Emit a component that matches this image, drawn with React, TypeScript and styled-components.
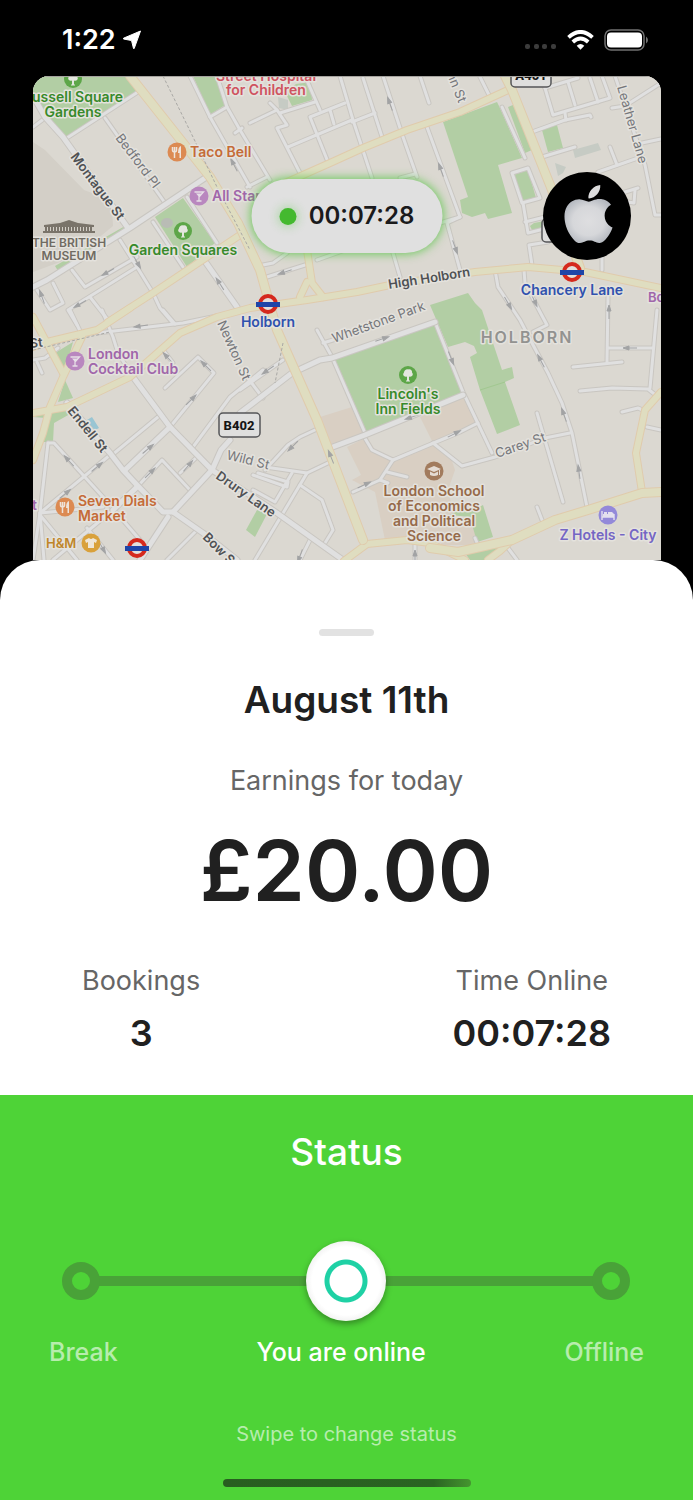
import React, { useState } from "react";
import styled, { createGlobalStyle } from "styled-components";

const sans = `Inter, "Liberation Sans", sans-serif`;

const GlobalStyle = createGlobalStyle`
  *, *::before, *::after { box-sizing: border-box; }
  body { margin: 0; background: #000; font-family: ${sans}; }
  h1, h2, p, dl, dd { margin: 0; }
`;

const Screen = styled.main`
  display: flex;
  flex-direction: column;
  min-height: 100vh;
  background: #000;
  color: #202020;
`;

/* ---------- status bar ---------- */

const StatusBar = styled.header`
  display: flex;
  align-items: center;
  justify-content: space-between;
  height: 76px;
  padding: 3px 44px 0 62px;
  color: #fff;
`;

const Cluster = styled.div<{ $gap: number }>`
  display: flex;
  align-items: center;
  gap: ${(p) => p.$gap}px;
`;

const Clock = styled.time`
  font-size: 27px;
  line-height: 32px;
  font-weight: 600;
`;

/* ---------- map ---------- */

const MapPanel = styled.section`
  position: relative;
  margin: 0 32px 0 33px;
  border-radius: 16px 16px 0 0;
  overflow: hidden;
  background: #dbd8d1;
`;

const MapSvg = styled.svg`
  display: block;
  width: 100%;
  height: auto;
  font-family: ${sans};
`;

const TimerPill = styled.div`
  position: absolute;
  top: 103px;
  left: 50%;
  transform: translateX(-50%);
  display: flex;
  align-items: center;
  justify-content: center;
  gap: 12px;
  width: 191px;
  height: 74px;
  border-radius: 37px;
  background: #e0e0e0;
  box-shadow: 0 0 10px 1px rgba(70, 195, 50, 0.75);
  font-size: 24px;
  line-height: 32px;
  font-weight: 600;
  color: #1a1a1c;
`;

const LiveDot = styled.span`
  width: 17px;
  height: 17px;
  border-radius: 50%;
  background: #44b92f;
  box-shadow: 0 0 10px 2px rgba(70, 195, 50, 0.3);
`;

const ProfileButton = styled.button`
  position: absolute;
  top: 96px;
  right: 30px;
  display: flex;
  align-items: center;
  justify-content: center;
  width: 88px;
  height: 88px;
  padding: 0 0 4px 2px;
  border: 0;
  border-radius: 50%;
  background: #000;
`;

type Pt = string;

const parks: Pt[] = [
  "33,76 127,76 137,91 66,138 33,98",
  "193,76 215,76 225,105 210,115",
  "155,217 183,198 215,243 187,267",
  "125,226 128,231 60,274 55,266",
  "285,92 296,84 311,82 312,100 292,106",
  "443,122 497,102 500,108 522,158 498,165 512,213 488,219 485,213 472,217 462,213 460,200 468,197",
  "508,107 513,105 532,150 525,153",
  "542,130 557,125 563,148 548,152",
  "513,175 528,170 536,198 520,202",
  "530,226 534,223 550,220 550,228 532,230",
  "430,305 468,293 475,303 482,310 502,370 512,367 514,378 505,382 520,425 497,434 480,390 470,357 477,353 474,346 465,342 448,347",
  "332,360 435,323 463,395 365,433",
  "470,512 483,505 493,537 477,542 470,517 450,515 458,510",
  "465,553 513,540 500,551 488,560 470,560",
  "257,510 267,514 255,537 246,530",
  "55,353 73,342 65,372",
  "65,380 73,398 58,402",
  "33,417 70,408 70,414 54,423 53,442 43,442 46,418",
];

const campus: Pt[] = [
  "320,417 352,407 365,433 332,447",
  "347,447 367,437 375,450 395,460 433,443 450,455 455,470 448,490 460,540 385,540 375,492 352,480 361,475",
  "420,417 463,397 478,423 433,443",
  "460,520 472,518 478,545 440,545",
];

const buildings: Pt[] = [
  "33,142 45,150 84,190 100,196 112,208 113,226 96,240 60,262 33,272",
];

const slateBlocks: Pt[] = [
  "573,150 598,143 601,150 575,158",
  "555,163 566,167 563,173 558,176",
  "278,97 288,100 288,110 279,108",
];

const minorRoads: Pt[] = [
  "67,138 138,92",
  "105,118 165,203",
  "33,127 45,118",
  "187,197 217,243",
  "153,222 183,267",
  "120,240 137,267 153,293 160,308 172,322",
  "137,257 85,287 72,270",
  "137,267 68,310 77,325",
  "90,297 108,320",
  "37,290 50,310 63,303 53,283",
  "190,76 210,117 250,187",
  "217,76 227,107 210,117",
  "227,107 240,130 270,180",
  "247,187 267,177",
  "235,133 242,128",
  "340,76 353,120 372,178",
  "363,78 382,137",
  "383,76 403,137 417,177",
  "420,76 429,103",
  "427,127 460,217 447,223 460,270",
  "440,223 460,217",
  "352,122 375,113",
  "250,123 277,110 270,103",
  "277,110 287,125 277,128 300,173",
  "280,113 315,102",
  "305,76 320,110",
  "345,103 310,117 328,162",
  "288,147 352,120",
  "330,110 334,124",
  "400,178 415,174",
  "393,253 400,277",
  "317,260 345,250",
  "263,265 273,263 287,253",
  "267,277 305,265",
  "502,107 525,158",
  "480,77 489,95",
  "512,173 528,168 540,198 522,203 512,173",
  "523,203 528,233 548,228",
  "525,222 545,217",
  "532,132 565,120 590,115 591,117",
  "545,88 553,115 610,98 602,76",
  "545,88 578,78",
  "568,82 575,105",
  "590,78 598,102",
  "565,113 566,120",
  "542,157 575,147",
  "612,108 625,106 661,83",
  "615,76 645,165 655,215 661,215",
  "598,172 638,158",
  "610,147 617,165",
  "642,143 661,139",
  "622,193 638,188",
  "635,190 634,203 628,202",
  "532,265 529,245 548,242",
  "602,250 602,270",
  "495,270 498,287 520,320 532,343 548,373 562,403 572,433 587,507",
  "524,270 525,283 540,312 547,325 533,332",
  "608,297 607,362",
  "573,367 622,362",
  "608,348 653,348",
  "657,310 650,388",
  "580,391 612,388 648,389 658,397",
  "622,412 638,408 645,411",
  "647,427 661,430",
  "317,330 332,357 365,433",
  "323,343 333,340",
  "435,322 463,392 492,453",
  "363,435 372,450 393,460 460,432 478,423",
  "393,460 380,480 353,492",
  "387,472 407,477",
  "380,480 388,483",
  "433,443 462,466 495,457 545,438 570,433",
  "537,413 563,502",
  "537,507 542,520",
  "475,538 478,545",
  "508,548 517,560",
  "240,390 283,360",
  "247,377 263,398",
  "265,470 288,445 300,437 315,430",
  "265,467 307,473 330,462",
  "307,473 255,560",
  "300,485 322,500 333,530 325,543",
  "310,540 300,560",
  "415,545 415,560",
  "292,473 275,502 253,490",
  "253,475 287,487 288,482 258,473",
  "70,310 82,335",
  "97,333 183,323 217,316",
  "163,310 175,324",
  "102,310 113,337 118,353 133,377",
  "33,360 45,358 58,348",
  "37,362 42,373",
  "163,350 173,363",
  "165,388 198,357 214,373 170,427",
  "112,455 158,417",
  "193,447 230,397 263,370",
  "137,487 162,460 190,490",
  "180,473 197,457",
  "40,513 110,455",
  "48,443 54,443 103,497 140,540",
  "48,443 40,513 33,560",
  "40,513 44,560",
  "40,513 103,507",
  "40,515 77,560",
  "53,560 113,510",
  "167,560 197,530",
  "87,528 113,560",
];

const wideRoads: Pt[] = [
  "33,96 45,117 63,137 128,228",
  "33,287 47,280 130,228 205,178",
  "202,257 237,307",
  "133,377 170,427 212,470 277,513 343,560",
  "67,403 110,453 123,470 137,485 163,512 173,512 203,533 237,560",
  "173,512 212,470 221,450 230,440",
  "125,470 170,427",
  "113,510 137,487",
  "140,560 168,517",
  "240,413 257,400 292,373 320,360 332,358 435,322",
  "330,448 365,435 463,395",
];

const mainRoads: Pt[] = [
  "108,322 153,293 243,233",
  "285,183 330,163 363,148 407,130 460,112 508,90",
  "33,413 67,407 130,377 180,333 217,317 250,308 307,300 357,292 390,285 475,272 528,267 585,272 661,288",
  "307,250 312,283 323,297",
  "307,282 300,297",
  "33,317 63,373",
  "33,347 47,342 97,330 130,308",
  "82,337 63,377 50,407 43,433 33,460",
  "661,392 645,410 636,453 642,492",
  "512,540 500,551 488,560",
  "344,561 367,544 407,540 430,543 465,560",
];

const trunkRoads: Pt[] = [
  "130,76 210,177 238,223 260,270 277,330 317,420 363,540",
  "505,76 512,90 552,190 580,268",
  "661,492 642,493 588,510 555,520 512,540 458,552 430,548",
];

const railLines: Pt[] = ["163,76 193,137 217,187 250,250", "283,343 275,383", "33,350 110,332"];

const arrows: [number, number, number][] = [
  [234, 165, 62], [137, 262, 240], [108, 272, -30], [80, 304, -30], [42, 297, 70],
  [220, 284, 57], [390, 104, 70], [441, 170, 70], [455, 247, 250], [285, 272, -18],
  [382, 339, 162], [451, 358, 248], [412, 417, 342], [454, 434, 153], [364, 485, 155],
  [331, 457, 68], [293, 446, -45], [268, 370, -35], [508, 303, 240], [534, 300, 245],
  [609, 312, 90], [630, 348, 0], [541, 361, 62], [564, 415, 70], [579, 472, 82],
  [141, 326, -8], [168, 358, 48], [206, 366, 45], [191, 400, 135], [148, 449, 140],
  [150, 473, 135], [188, 466, 130], [97, 467, 140], [69, 461, 48], [65, 494, 140],
  [300, 556, -70], [102, 547, 240], [415, 557, 90],
];

const Roads = ({ lines, width, fill, edge }: { lines: Pt[]; width: number; fill: string; edge: string }) => (
  <g fill="none" strokeLinecap="round" strokeLinejoin="round">
    {lines.map((l, i) => <polyline key={`e${i}`} points={l} stroke={edge} strokeWidth={width + 2} />)}
    {lines.map((l, i) => <polyline key={`f${i}`} points={l} stroke={fill} strokeWidth={width} />)}
  </g>
);

const Areas = ({ shapes, fill }: { shapes: Pt[]; fill: string }) => (
  <g fill={fill}>{shapes.map((s, i) => <polygon key={i} points={s} />)}</g>
);

type LabelProps = {
  x: number; y: number; lines: string[]; color: string; size?: number; step?: number;
  weight?: number; anchor?: "start" | "middle"; angle?: number; spacing?: number;
};

const Label = ({ x, y, lines, color, size = 14, step = 15, weight = 600, anchor = "middle", angle = 0, spacing = 0 }: LabelProps) => (
  <text
    fill={color} fontSize={size} fontWeight={weight} textAnchor={anchor} letterSpacing={spacing}
    stroke="#e4e2dd" strokeWidth={3} strokeLinejoin="round" paintOrder="stroke"
    transform={`rotate(${angle} ${x} ${y})`}
  >
    {lines.map((l, i) => <tspan key={l} x={x} y={y + i * step}>{l}</tspan>)}
  </text>
);

const Underground = ({ x, y }: { x: number; y: number }) => (
  <g>
    <circle cx={x} cy={y} r={8} fill="#e2dfdc" stroke="#d5291d" strokeWidth={4} />
    <rect x={x - 12} y={y - 2} width={24} height={5} fill="#1f45a8" />
  </g>
);

const Tree = ({ x, y }: { x: number; y: number }) => (
  <g transform={`translate(${x} ${y})`}>
    <circle r={9} fill="#5da648" />
    <path d="M-1 5.500V1.500C-4 2.500-6-.5-4-2.500-4-5-1-6.500 0-5.500 2-6.500 4.500-5 4-2.500 6-.5 4 2.500 1 1.500V5.500H2V6.500H-2V5.500Z" fill="#e4e6df" />
  </g>
);

const Cocktail = ({ x, y }: { x: number; y: number }) => (
  <g transform={`translate(${x} ${y})`}>
    <circle r={9.500} fill="#b987bf" />
    <path d="M-4.500-4H4.500L0 1V5M-2.500 5H2.500" fill="none" stroke="#e6dfe6" strokeWidth={1.300} />
    <path d="M-3-2.500H3L0 1Z" fill="#e6dfe6" />
  </g>
);

const Cutlery = ({ x, y }: { x: number; y: number }) => (
  <g transform={`translate(${x} ${y})`}>
    <circle r={9.500} fill="#dc8a52" />
    <path d="M-4.500-5V-2Q-4.500 0-2.500 0T-.5-2V-5M-2.500-5V6" fill="none" stroke="#eee3da" strokeWidth={1.500} />
    <path d="M4-6V6H2.500V1H1Q1-5 4-6Z" fill="#eee3da" />
  </g>
);

const LondonMap = () => (
  <MapSvg viewBox="33 76 628 484" role="img" aria-label="Map of Holborn, London">
    <rect x={33} y={76} width={628} height={484} fill="#dbd8d1" />
    <Areas shapes={buildings} fill="#d3cfc7" />
    <Areas shapes={campus} fill="#d9cfc3" />
    <Areas shapes={parks} fill="#b2cea4" />
    <Areas shapes={slateBlocks} fill="#c6cbc4" />
    <polygon points="87,420 92,417 99,428 93,431" fill="#99c5d3" />
    <ellipse cx={167} cy={223} rx={6} ry={5} fill="#b9bcb5" />
    <polyline points="480,390 505,382" stroke="#a1c890" fill="none" />

    <Roads lines={minorRoads} width={3} fill="#e0e0e0" edge="#c9c6c1" />
    <Roads lines={wideRoads} width={5} fill="#e0e0e0" edge="#c9c6c1" />
    <Roads lines={mainRoads} width={6} fill="#dfddc0" edge="#e0cbac" />
    <Roads lines={trunkRoads} width={8} fill="#dfddc0" edge="#e0cbac" />

    <g fill="none" stroke="#a9a8a5" strokeWidth={1} strokeDasharray="3 2">
      {railLines.map((l) => <polyline key={l} points={l} />)}
    </g>

    <g stroke="#a2a3a4" fill="#a2a3a4" strokeWidth={1}>
      {arrows.map(([x, y, a], i) => (
        <g key={i} transform={`translate(${x} ${y}) rotate(${a})`}>
          <path d="M-2 0H7" />
          <path d="M-7 0L-1-2V2Z" />
        </g>
      ))}
    </g>

    <Tree x={73} y={79} />
    <Label x={73} y={102} lines={["Russell Square", "Gardens"]} color="#378a2b" />
    <Tree x={183} y={231} />
    <Label x={183} y={255} lines={["Garden Squares"]} color="#378a2b" />
    <Tree x={408} y={375} />
    <Label x={408} y={399} lines={["Lincoln's", "Inn Fields"]} color="#378a2b" />

    <Label x={266} y={81} lines={["Street Hospital", "for Children"]} color="#cf5360" step={14} />

    <Cutlery x={177} y={152} />
    <Label x={190} y={157} lines={["Taco Bell"]} color="#c56b37" anchor="start" />
    <Cutlery x={65} y={507} />
    <Label x={78} y={506} lines={["Seven Dials", "Market"]} color="#c56b37" anchor="start" />
    <Cocktail x={199} y={196} />
    <Label x={212} y={201} lines={["All Star Lanes"]} color="#a066aa" anchor="start" />
    <Cocktail x={75} y={361} />
    <Label x={88} y={359} lines={["London", "Cocktail Club"]} color="#a066aa" anchor="start" />
    <Label x={648} y={302} lines={["Bounce"]} color="#a066aa" size={13} anchor="start" />
    <Label x={32} y={510} lines={["t"]} color="#a066aa" anchor="start" />

    <g fill="#7a746a">
      <path d="M44 225 60 223 69 220 78 223 94 225V227H44ZM43 231H95V233H43Z" />
      <path d="M46 227V231M49 227V231M52 227V231M55 227V231M58 227V231M61 227V231M64 227V231M67 227V231M70 227V231M73 227V231M76 227V231M79 227V231M82 227V231M85 227V231M88 227V231M91 227V231" stroke="#7a746a" strokeWidth={2} />
    </g>
    <Label x={69} y={247} lines={["THE BRITISH", "MUSEUM"]} color="#706b62" size={12} step={13} />

    <Underground x={268} y={304} />
    <Label x={268} y={327} lines={["Holborn"]} color="#2f51ae" />
    <Underground x={572} y={272} />
    <Label x={572} y={295} lines={["Chancery Lane"]} color="#2f51ae" />
    <Underground x={137} y={548} />

    <g transform="translate(434 471)">
      <circle r={9.500} fill="#a27b5d" />
      <path d="M-7-2 0-5 7-2 0 1ZM-4 .5 0 2.500 4 .5V4Q0 6-4 4ZM5-1V4H6V-1Z" fill="#e5dcd4" />
    </g>
    <Label x={434} y={496} lines={["London School", "of Economics", "and Political", "Science"]} color="#966a4a" />

    <g transform="translate(608 515)">
      <circle r={9.500} fill="#9389d9" />
      <path d="M-6-4V5M-6 2H6M6-1V5" stroke="#e3e0ee" strokeWidth={1.400} />
      <path d="M-5-1H6V2H-5ZM-4-3H-1V-1H-4ZM0-3H4L6-1H0Z" fill="#e3e0ee" />
    </g>
    <Label x={608} y={540} lines={["Z Hotels - City"]} color="#7466c4" />

    <g transform="translate(91 543)">
      <circle r={9.500} fill="#d9a13b" />
      <path d="M-6-3-2-5Q0-3 2-5L6-3 5 0 3-1V5H-3V-1L-5 0Z" fill="#eee6d8" />
    </g>
    <Label x={46} y={548} lines={["H&M"]} color="#bf8529" size={13} anchor="start" />

    <Label x={70} y={157} lines={["Montague St"]} color="#4f5154" size={13} anchor="start" angle={53} />
    <Label x={115} y={138} lines={["Bedford Pl"]} color="#75767a" size={13} weight={400} anchor="start" angle={53} />
    <Label x={389} y={289} lines={["High Holborn"]} color="#4f5154" size={13} anchor="start" angle={-9} />
    <Label x={334} y={343} lines={["Whetstone Park"]} color="#75767a" size={13} weight={400} anchor="start" angle={-20} />
    <Label x={217} y={323} lines={["Newton St"]} color="#75767a" size={13} weight={400} anchor="start" angle={66} />
    <Label x={441} y={60} lines={["John St"]} color="#75767a" size={13} weight={400} anchor="start" angle={68} />
    <Label x={617} y={87} lines={["Leather Lane"]} color="#75767a" size={13} weight={400} anchor="start" angle={74} />
    <Label x={497} y={458} lines={["Carey St"]} color="#75767a" size={13} weight={400} anchor="start" angle={-19} />
    <Label x={226} y={459} lines={["Wild St"]} color="#75767a" size={13} weight={400} anchor="start" angle={14} />
    <Label x={67} y={411} lines={["Endell St"]} color="#4f5154" size={13} anchor="start" angle={51} />
    <Label x={215} y={478} lines={["Drury Lane"]} color="#4f5154" size={13} anchor="start" angle={35} />
    <Label x={202} y={538} lines={["Bow St"]} color="#4f5154" size={13} anchor="start" angle={45} />
    <Label x={30} y={348} lines={["St"]} color="#4f5154" size={13} anchor="start" angle={-6} />
    <Label x={527} y={343} lines={["HOLBORN"]} color="#929290" size={16} spacing={2} />

    <g fill="#dfdfde" stroke="#555658" strokeWidth={1.500}>
      <rect x={219} y={413} width={41} height={24} rx={4} />
      <rect x={511} y={63} width={40} height={24} rx={4} />
      <rect x={542} y={219} width={40} height={23} rx={4} />
    </g>
    <g fill="#151515" fontFamily="Roboto, sans-serif" fontSize={13} fontWeight={800} textAnchor="middle">
      <text x={239} y={430}>B402</text>
      <text x={531} y={80}>A401</text>
    </g>
    <path d="M33 76.500H661" stroke="#a5a39f" />
  </MapSvg>
);

/* ---------- earnings sheet ---------- */

const Sheet = styled.section`
  display: flex;
  flex-direction: column;
  align-items: center;
  padding: 69px 0 38px;
  border-radius: 40px 40px 0 0;
  background: #fff;
`;

const Handle = styled.div`
  width: 55px;
  height: 7px;
  margin-bottom: 40px;
  border-radius: 4px;
  background: #e2e2e2;
`;

const DateTitle = styled.h1`
  font-size: 37px;
  line-height: 48px;
  font-weight: 600;
`;

const Caption = styled.p`
  margin-top: 39px;
  font-size: 27px;
  line-height: 36px;
  color: #666;
`;

const Amount = styled.p`
  margin-top: 24px;
  font-size: 84px;
  line-height: 96px;
  font-weight: 600;
`;

const Stats = styled.dl`
  display: flex;
  align-self: stretch;
  justify-content: space-between;
  margin-top: 44px;
  padding: 0 82px;
`;

const Stat = styled.div`
  display: flex;
  flex-direction: column;
  align-items: center;
  gap: 10px;

  dt {
    font-size: 27px;
    line-height: 36px;
    color: #666;
  }

  dd {
    font-size: 36px;
    line-height: 48px;
    font-weight: 600;
  }
`;

/* ---------- availability ---------- */

const StatusPanel = styled.section`
  display: flex;
  flex: 1;
  flex-direction: column;
  align-items: center;
  padding: 33px 0 13px;
  background: #4ed337;
  color: #fff;
`;

const StatusTitle = styled.h2`
  font-size: 37px;
  line-height: 48px;
  font-weight: 500;
`;

const SliderArea = styled.div`
  display: grid;
  align-self: stretch;
  align-items: center;
  margin-top: 65px;
  padding: 0 63px 0 62px;

  > * { grid-area: 1 / 1; }
`;

const Rail = styled.div`
  height: 10px;
  margin: 0 30px;
  background: #49a238;
`;

const Stops = styled.div`
  display: flex;
  justify-content: space-between;
`;

const Stop = styled.span`
  width: 38px;
  height: 38px;
  border: 10px solid #49a238;
  border-radius: 50%;
`;

const StatusSlider = styled.input`
  appearance: none;
  width: 100%;
  height: 80px;
  margin: 0;
  background: transparent;

  &::-webkit-slider-thumb {
    appearance: none;
    width: 80px;
    height: 80px;
    border: 0;
    border-radius: 50%;
    background: radial-gradient(circle, #fff 15px, #fff 16px, #1fd1a5 17px, #1fd1a5 21px, #fff 22px, #fff 34px, #f3f3f3 40px);
    box-shadow: 0 3px 6px rgba(0, 0, 0, 0.35);
  }
`;

const Choices = styled.div`
  display: flex;
  align-self: stretch;
  justify-content: space-between;
  margin-top: 13px;
  padding: 0 49px;
`;

const Choice = styled.button<{ $active: boolean }>`
  padding: 0;
  border: 0;
  background: none;
  font-family: inherit;
  font-size: 25px;
  line-height: 36px;
  font-weight: 500;
  color: ${(p) => (p.$active ? "#fff" : "rgba(255, 255, 255, 0.6)")};
`;

const Hint = styled.p`
  margin-top: 52px;
  font-size: 20px;
  line-height: 24px;
  color: rgba(255, 255, 255, 0.6);
`;

const HomeIndicator = styled.div`
  width: 248px;
  height: 8px;
  margin-top: auto;
  border-radius: 4px;
  background: linear-gradient(90deg, #285e20 0%, #2a6422 85%, #45962f 100%);
`;

const choices = ["Break", "You are online", "Offline"];

export default function App() {
  const [status, setStatus] = useState(1);

  return (
    <Screen>
      <GlobalStyle />
      <StatusBar>
        <Cluster $gap={6}>
          <Clock>1:22</Clock>
          <svg width="20" height="20" viewBox="0 0 20 20" fill="#fff" stroke="#fff" strokeLinejoin="round" aria-hidden="true">
            <path d="M18.500 1 12.200 18.500H11.500L9.500 10.500 1.500 9V8.200Z" />
          </svg>
        </Cluster>
        <Cluster $gap={10}>
          <svg width="32" height="22" viewBox="0 0 32 22" fill="#3c3c3c" aria-hidden="true">
            <rect x="0" y="15" width="5" height="5" rx="2" />
            <rect x="9" y="15" width="5" height="5" rx="2" />
            <rect x="17" y="15" width="5" height="5" rx="2" />
            <rect x="26" y="15" width="5" height="5" rx="2" />
          </svg>
          <svg width="27" height="20" viewBox="0 0 27 20" aria-hidden="true">
            <g fill="none" stroke="#fff" strokeWidth="3.800">
              <path d="M1.500 7.300Q13.500-3.500 25.500 7.300" />
              <path d="M5.800 12Q13.500 5 21.200 12" />
            </g>
            <path d="M13.500 19.800 9.700 15.800Q13.500 12.300 17.300 15.800Z" fill="#fff" />
          </svg>
          <svg width="45" height="22" viewBox="0 0 45 22" aria-hidden="true">
            <rect x="1" y="1" width="39" height="20" rx="6" fill="none" stroke="#717171" strokeWidth="1.500" />
            <rect x="3" y="3.500" width="35" height="15" rx="4" fill="#fff" />
            <path d="M42 7.500Q44 9 44 11T42 14.500Z" fill="#717171" />
          </svg>
        </Cluster>
      </StatusBar>

      <MapPanel>
        <LondonMap />
        <TimerPill>
          <LiveDot />
          <span>00:07:28</span>
        </TimerPill>
        <ProfileButton aria-label="Profile">
          <svg width="59" height="58" viewBox="0 0 24 24" preserveAspectRatio="none" aria-hidden="true">
            <defs>
              <radialGradient id="silver" cx="50%" cy="50%" r="55%">
                <stop offset="0" stopColor="#dedee0" />
                <stop offset="0.600" stopColor="#d6d7da" />
                <stop offset="1" stopColor="#b6bac1" />
              </radialGradient>
            </defs>
            <path fill="url(#silver)" d="M12.152 6.896c-.948 0-2.415-1.078-3.960-1.040-2.040.027-3.910 1.183-4.961 3.014-2.117 3.675-.546 9.103 1.519 12.090 1.013 1.454 2.208 3.090 3.792 3.039 1.520-.065 2.090-.987 3.935-.987 1.831 0 2.350.987 3.960.948 1.637-.026 2.676-1.480 3.676-2.948 1.156-1.688 1.636-3.325 1.662-3.415-.039-.013-3.182-1.221-3.220-4.857-.026-3.040 2.480-4.494 2.597-4.559-1.429-2.090-3.623-2.324-4.390-2.376-2-.156-3.675 1.090-4.610 1.090z" />
            <path fill="#dcdcdd" d="M15.530 3.830c.843-1.012 1.400-2.427 1.245-3.830-1.207.052-2.662.805-3.532 1.818-.780.896-1.454 2.338-1.273 3.714 1.338.104 2.715-.688 3.559-1.701" />
          </svg>
        </ProfileButton>
      </MapPanel>

      <Sheet>
        <Handle />
        <DateTitle>August 11th</DateTitle>
        <Caption>Earnings for today</Caption>
        <Amount>£20.00</Amount>
        <Stats>
          <Stat>
            <dt>Bookings</dt>
            <dd>3</dd>
          </Stat>
          <Stat>
            <dt>Time Online</dt>
            <dd>00:07:28</dd>
          </Stat>
        </Stats>
      </Sheet>

      <StatusPanel>
        <StatusTitle id="status-title">Status</StatusTitle>
        <SliderArea>
          <Rail />
          <Stops>
            <Stop />
            <Stop />
          </Stops>
          <StatusSlider
            type="range"
            min={0}
            max={2}
            step={1}
            value={status}
            aria-labelledby="status-title"
            aria-valuetext={choices[status]}
            onChange={(e) => setStatus(Number(e.target.value))}
          />
        </SliderArea>
        <Choices>
          {choices.map((c, i) => (
            <Choice key={c} type="button" $active={i === status} onClick={() => setStatus(i)}>
              {c}
            </Choice>
          ))}
        </Choices>
        <Hint>Swipe to change status</Hint>
        <HomeIndicator />
      </StatusPanel>
    </Screen>
  );
}
